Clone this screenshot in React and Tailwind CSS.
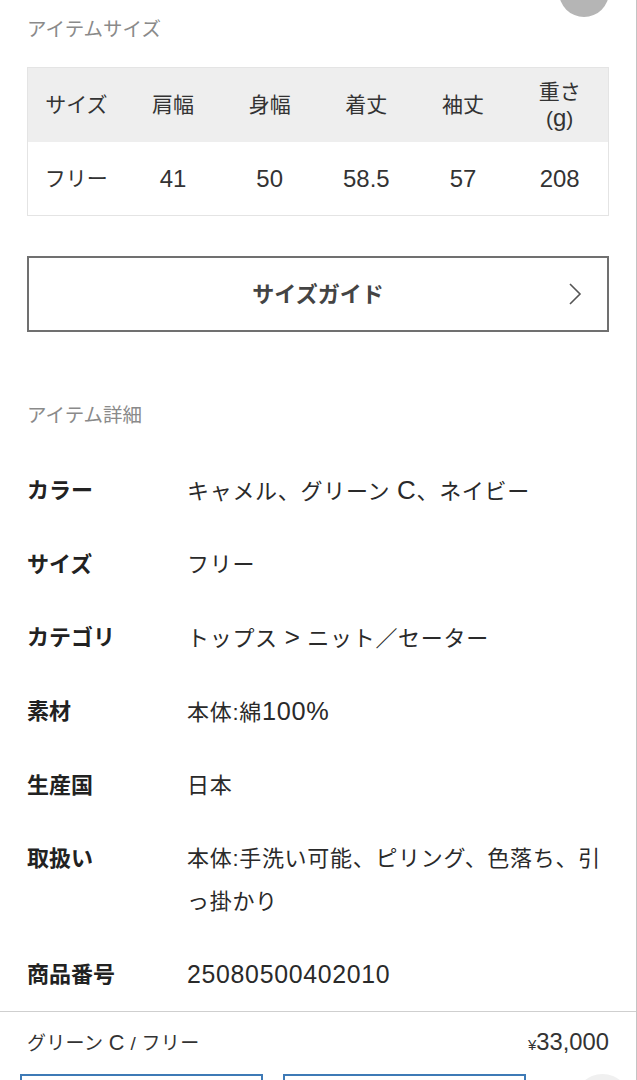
import React from "react";

const font = { fontFamily: '"Liberation Sans", "Noto Sans CJK JP", sans-serif' };

function N({ children, big }) {
  return <span className={big ? "text-[1.18em]" : "text-[1.14em]"}>{children}</span>;
}

const rows = [
  ["カラー", <span key="a">キャメル、グリーン <N big>C</N>、ネイビー</span>],
  ["サイズ", "フリー"],
  ["カテゴリ", <span key="d">トップス <N big>&gt;</N> ニット／セーター</span>],
  ["素材", <span key="b">本体:綿<span className="text-[1.15em]">100%</span></span>],
  ["生産国", "日本"],
  ["取扱い", "本体:手洗い可能、ピリング、色落ち、引っ掛かり"],
  ["商品番号", <span key="c" className="text-[1.13em]">25080500402010</span>],
];

export default function App() {
  return (
    <div
      className="relative w-[637px] h-[1080px] overflow-hidden bg-white border-r border-[#c4c4c4] text-[#333]"
      style={font}
    >
      <div className="absolute right-[27px] top-[-33px] w-[50px] h-[50px] rounded-full bg-[#b5b5b5]" />

      <div className="px-[27px] pt-[15px]">
        <h2 className="text-[19.5px] leading-[28px] text-[#8a8a8a]">アイテムサイズ</h2>

        <div className="mt-[24px] border border-[#e4e4e4]">
          <div className="grid grid-cols-6 h-[74px] bg-[#eeeeee] items-center text-center text-[21px] leading-[26px] text-[#333]">
            <div>サイズ</div>
            <div>肩幅</div>
            <div>身幅</div>
            <div>着丈</div>
            <div>袖丈</div>
            <div>
              重さ
              <br />
              (<N>g</N>)
            </div>
          </div>
          <div className="grid grid-cols-6 h-[73px] items-center text-center text-[21px] text-[#333]">
            <div>フリー</div>
            <div><N>41</N></div>
            <div><N>50</N></div>
            <div><N>58.5</N></div>
            <div><N>57</N></div>
            <div><N>208</N></div>
          </div>
        </div>

        <button className="mt-[40px] relative w-full h-[76px] border-2 border-[#707070] flex items-center justify-center">
          <span className="text-[22px] font-bold text-[#444]">サイズガイド</span>
          <svg
            className="absolute right-[25px] top-1/2 -translate-y-1/2"
            width="14"
            height="24"
            viewBox="0 0 14 24"
            fill="none"
            stroke="#555"
            strokeWidth="1.6"
          >
            <path d="M2 2 L12 12 L2 22" />
          </svg>
        </button>

        <h2 className="mt-[69px] text-[19.5px] leading-[28px] text-[#8a8a8a]">アイテム詳細</h2>

        <div className="mt-[40px] flex flex-col gap-[30px]">
          {rows.map(([label, val]) => (
            <div key={label} className="flex text-[22px] leading-[43px] tracking-[0.7px]">
              <div className="w-[160px] shrink-0 font-bold text-[#222] tracking-normal">{label}</div>
              <div className="flex-1 text-[#2a2a2a]">{val}</div>
            </div>
          ))}
        </div>
      </div>

      <div className="absolute left-0 right-0 top-[1011px] border-t border-[#cfcfcf] bg-white">
        <div className="px-[27px] pt-[17px] flex justify-between items-center text-[#333]">
          <span className="text-[19px] leading-[26px] tracking-[0.3px]">
            グリーン <N>C</N> / フリー
          </span>
          <span className="text-[19px] leading-[26px]">
            <span className="text-[15px]">¥</span>
            <span className="text-[1.25em]">33,000</span>
          </span>
        </div>
        <div className="flex pl-[20px] pt-[16px] gap-[20px] items-start">
          <div className="w-[243px] h-[50px] border-2 border-[#3e7ab6]" />
          <div className="w-[243px] h-[50px] border-2 border-[#3e7ab6]" />
          <div className="ml-[29px] w-[55px] h-[55px] rounded-full bg-[#f0f0f0]" />
        </div>
      </div>
    </div>
  );
}
